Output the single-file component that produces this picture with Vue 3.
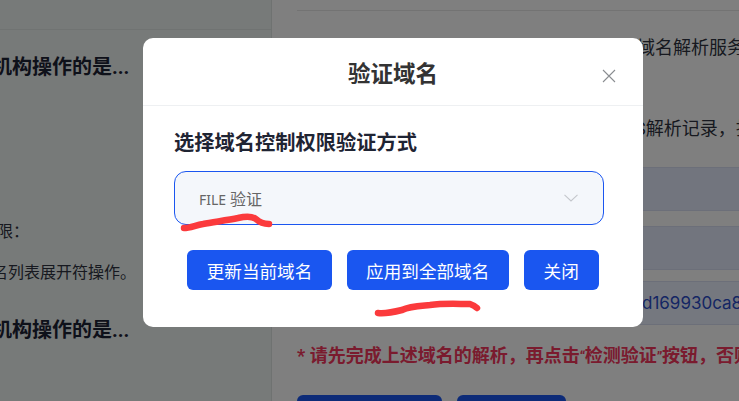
<template>
  <div class="page">
    <aside class="side">
      <div class="side-head"></div>
      <p class="question first">机构操作的是...</p>
      <p class="note limit">限：</p>
      <p class="note list">名列表展开符操作。</p>
      <p class="question last">机构操作的是...</p>
    </aside>

    <main class="content">
      <div class="content-head"></div>
      <p class="line first-line">域名解析服务</p>
      <p class="line second-line">S解析记录，打</p>
      <div class="record"></div>
      <div class="record second-record"></div>
      <div class="record code-record"><span>d169930ca8</span></div>
      <p class="warning">* 请先完成上述域名的解析，再点击<span class="quote">“</span>检测验证<span class="quote">”</span>按钮，否则</p>
      <div class="actions">
        <div class="action wide"></div>
        <div class="action"></div>
      </div>
    </main>

    <div class="mask"></div>

    <section class="dialog">
      <header class="dialog-head">
        <h2>验证域名</h2>
        <svg class="close" viewBox="0 0 14 14" width="14" height="14">
          <path d="M1 1 13 13M13 1 1 13" fill="none" stroke="#8a8d91" stroke-width="1.1" />
        </svg>
      </header>
      <div class="dialog-body">
        <h3>选择域名控制权限验证方式</h3>
        <div class="select">
          <span><span class="latin">FILE</span> 验证</span>
          <svg viewBox="0 0 14 8" width="14" height="8">
            <path d="M.5.8 7 7 13.5.8" fill="none" stroke="#c4c7cc" stroke-width="1.1" />
          </svg>
        </div>
        <div class="buttons">
          <button v-for="label in buttons" :key="label" type="button">{{ label }}</button>
        </div>
      </div>
    </section>

    <svg class="scribbles" viewBox="0 0 739 401" width="739" height="401">
      <path d="M184 228C190 228 196 225 203 224 214 222 228 220 238 218 246 216 252 216 256 219 260 223 263 224 269 224" />
      <path d="M378 313C386 314 394 312 402 310 410 306 418 306 430 305 444 303 458 304 470 304 473 305 475 306 477 308" />
    </svg>
  </div>
</template>

<script setup>
const buttons = ['更新当前域名', '应用到全部域名', '关闭'];
</script>

<style>
html,
body {
  margin: 0;
  overflow: hidden;
}
</style>

<style scoped>
.page {
  position: relative;
  display: flex;
  width: 739px;
  height: 401px;
  overflow: hidden;
  background: #fff;
  font-family: Roboto, "Noto Sans CJK SC", sans-serif;
}

.side {
  width: 271px;
  flex: none;
  overflow: hidden;
  background: #eff5f2;
  border-right: 1px solid #dfe4e2;
}

.side-head {
  height: 29px;
  border-bottom: 1px solid #e1e6e4;
}

.side p {
  margin: 0;
  white-space: nowrap;
}

.question {
  font-size: 20px;
  font-weight: 700;
  line-height: 28px;
  color: #1d2235;
  text-indent: -8px;
}

.side .first {
  margin-top: 23px;
}

.note {
  font-size: 16px;
  line-height: 24px;
  color: #2e3340;
}

.side .limit {
  margin-top: 139px;
  text-indent: -3px;
}

.side .list {
  margin-top: 17px;
  text-indent: -8px;
}

.side .last {
  margin-top: 31px;
}

.content {
  flex: 1;
  min-width: 0;
  padding-left: 25px;
  overflow: hidden;
}

.content-head {
  height: 10px;
  border-bottom: 1px solid #e6e6e6;
}

.line {
  margin: 0;
  padding-left: 340px;
  font-size: 18px;
  line-height: 28px;
  color: #2e3340;
  white-space: nowrap;
}

.first-line {
  margin-top: 23px;
}

.second-line {
  margin-top: 53px;
  padding-left: 338px;
}

.record {
  height: 44px;
  margin-top: 24px;
  box-sizing: border-box;
  background: #e4ebfd;
  border-top: 1px solid #d8dff2;
  border-bottom: 1px solid #d8dff2;
}

.second-record {
  margin-top: 15px;
}

.code-record {
  margin-top: 11px;
  padding-left: 345px;
  background: #eaf1ff;
  font-family: Inter, "Noto Sans", sans-serif;
  font-size: 17px;
  line-height: 42px;
  color: #2a4cc8;
  white-space: nowrap;
}

.warning {
  margin: 17px 0 0;
  font-size: 18px;
  font-weight: 700;
  line-height: 28px;
  color: #f5365c;
  white-space: nowrap;
}

.quote {
  font-size: 14px;
  letter-spacing: -0.5px;
}

.actions {
  display: flex;
  gap: 15px;
  margin-top: 24px;
}

.action {
  width: 109px;
  height: 40px;
  background: #1a56f0;
  border-radius: 6px;
}

.action.wide {
  width: 145px;
}

.mask {
  position: absolute;
  inset: 0;
  background: rgba(0, 0, 0, 0.5);
}

.dialog {
  position: absolute;
  top: 38px;
  left: 143px;
  width: 500px;
  height: 289px;
  background: #fff;
  border-radius: 10px;
  overflow: hidden;
}

.dialog-head {
  position: relative;
  display: flex;
  align-items: center;
  justify-content: center;
  height: 67px;
  border-bottom: 1px solid #eef0f2;
}

.dialog-head h2 {
  margin: 0;
  font-size: 22.5px;
  font-weight: 700;
  color: #333;
}

.close {
  position: absolute;
  top: 31px;
  right: 27px;
}

.dialog-body {
  padding: 21px 31px 0;
}

.dialog-body h3 {
  margin: 0;
  font-size: 20.25px;
  font-weight: 700;
  line-height: 32px;
  color: #1f2433;
}

.select {
  display: flex;
  align-items: center;
  justify-content: space-between;
  box-sizing: border-box;
  width: 430px;
  height: 54px;
  margin-top: 12px;
  padding: 0 25px 0 24px;
  background: #f4f7fb;
  border: 1px solid #1a56f0;
  border-radius: 12px;
  font-size: 16px;
  color: #666;
}

.latin {
  font-family: "Noto Sans", sans-serif;
  font-size: 14px;
}

.buttons {
  display: flex;
  justify-content: center;
  gap: 15px;
  margin-top: 25px;
}

.buttons button {
  height: 40px;
  min-width: 75px;
  padding: 0 19.4px;
  border: 0;
  border-radius: 6px;
  background: #1a56f0;
  font: inherit;
  font-size: 17.6px;
  color: #fff;
  white-space: nowrap;
}

.scribbles {
  position: absolute;
  inset: 0;
  pointer-events: none;
}

.scribbles path {
  fill: none;
  stroke: #fb3a3c;
  stroke-width: 6.5;
  stroke-linecap: round;
  stroke-linejoin: round;
}
</style>
